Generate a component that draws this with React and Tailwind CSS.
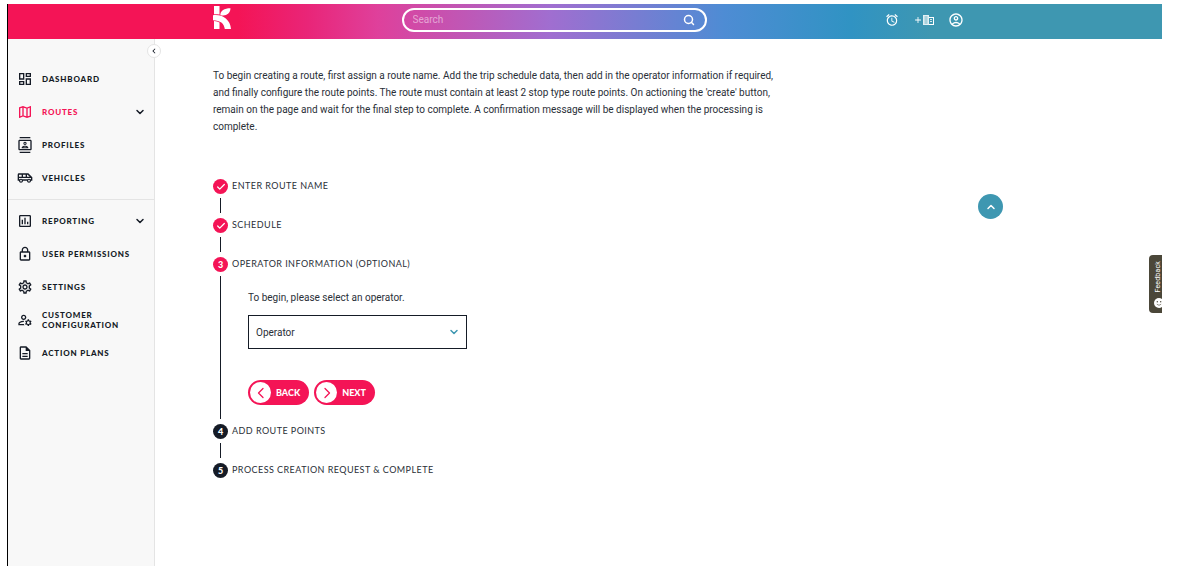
import React, { useState } from "react";
import { Check, ChevronDown, ChevronUp, Search } from "lucide-react";
import {
  MdAlarm,
  MdAdd,
  MdChevronLeft,
  MdOutlineAccountCircle,
  MdOutlineAirportShuttle,
  MdOutlineAssessment,
  MdOutlineContacts,
  MdOutlineDashboard,
  MdOutlineDescription,
  MdOutlineLock,
  MdOutlineManageAccounts,
  MdOutlineMap,
  MdOutlineSettings,
} from "react-icons/md";

const mainLinks = [
  { label: "Dashboard", icon: MdOutlineDashboard },
  { label: "Routes", icon: MdOutlineMap, active: true, expandable: true },
  { label: "Profiles", icon: MdOutlineContacts },
  { label: "Vehicles", icon: MdOutlineAirportShuttle },
];

const adminLinks = [
  { label: "Reporting", icon: MdOutlineAssessment, expandable: true },
  { label: "User permissions", icon: MdOutlineLock },
  { label: "Settings", icon: MdOutlineSettings },
  { label: "Customer configuration", icon: MdOutlineManageAccounts },
  { label: "Action plans", icon: MdOutlineDescription },
];

const Logo = () => (
  <svg viewBox="0 0 18 23" className="h-[23px] w-[18px]" fill="currentColor">
    <path d="M1 0h5.500v8.600C4.800 8.300 3 8.200 1 8.300z" />
    <path d="M7.300 8.800C7.600 4.800 11 2.300 17.500 2.300 17.300 7 13.500 10.200 8.600 9.400z" />
    <path d="M0 9.200c5-.6 9.500.4 12.800 3.300 3.200 2.700 4.700 6 5.200 10.500h-6.200C11 17.500 7.500 14.300 0 14.200z" />
    <path d="M1 15.100c2.200.1 4 .6 5.500 1.500V23H1z" />
  </svg>
);

const CompanyIcon = () => (
  <svg viewBox="0 0 11 10" className="h-2.5 w-[11px]" fill="currentColor">
    <path d="M0 0h6v10H0z" opacity=".85" />
    <path d="M6 2h5v8H6V9h4V3H6z" />
    <path d="M7 4h2v1H7zM7 6h2v1H7z" opacity=".8" />
    <path d="M1 2h4M1 4h4M1 6h4M1 8h4" stroke="#3e97b1" strokeWidth=".4" />
    <path d="M3 1v8" stroke="#3e97b1" strokeWidth=".4" />
  </svg>
);

const Header = () => {
  const [search, setSearch] = useState("");

  return (
    <header className="flex h-[35px] items-center bg-[linear-gradient(90deg,#f41456_0%,#f41456_20%,#e92578_26%,#df409b_32%,#a06ed0_47%,#4e8cd4_62%,#3093c3_73%,#3e97b1_80%)] pr-[198px] pl-[205px] text-white">
      <a href="#home" aria-label="Home" className="mb-2">
        <Logo />
      </a>
      <form
        role="search"
        onSubmit={(e) => e.preventDefault()}
        className="mx-auto mb-1 flex h-6 w-[305px] items-center rounded-full border-2 border-white pr-2.5 pl-[9px]"
      >
        <input
          type="text"
          aria-label="Search"
          placeholder="Search"
          value={search}
          onChange={(e) => setSearch(e.target.value)}
          className="min-w-0 flex-1 bg-transparent text-[10px] outline-none placeholder:text-white/50"
        />
        <button type="submit" aria-label="Submit search">
          <Search className="h-3 w-3" strokeWidth={3} />
        </button>
      </form>
      <div className="mb-1 flex items-center gap-3.5 pl-2">
        <button type="button" aria-label="Alerts">
          <MdAlarm className="h-3.5 w-3.5" />
        </button>
        <button type="button" aria-label="Add company" className="flex items-center">
          <MdAdd className="h-2.5 w-2.5" />
          <CompanyIcon />
        </button>
        <button type="button" aria-label="Account">
          <MdOutlineAccountCircle className="h-4 w-4" />
        </button>
      </div>
    </header>
  );
};

const NavItem = ({ label, icon: Icon, active, expandable }) => (
  <li>
    <a
      href="#nav"
      className={`flex h-[33px] items-center gap-[9px] pr-2 pl-[9px] ${
        active ? "text-[#f41456]" : "text-[#151b26]"
      }`}
    >
      <Icon className="h-4 w-4 shrink-0" />
      <span className="flex-1 font-[Lato,sans-serif] text-[8px] leading-[10px] font-black tracking-widest uppercase">
        {label}
      </span>
      {expandable && (
        <ChevronDown
          className="h-3 w-3 shrink-0 text-[#151b26]"
          strokeWidth={3}
        />
      )}
    </a>
  </li>
);

const Sidebar = () => (
  <aside className="relative w-[147px] shrink-0 border-r border-[#e4e4e4] bg-[#f8f8f8] pt-[23px]">
    <button
      type="button"
      aria-label="Collapse menu"
      className="absolute top-[5px] -right-[7px] flex h-3.5 w-3.5 items-center justify-center rounded-full border border-[#e4e4e4] bg-white"
    >
      <MdChevronLeft className="h-2.5 w-2.5" />
    </button>
    <nav>
      <ul className="border-b border-[#e4e4e4] pb-[5px]">
        {mainLinks.map((link) => (
          <NavItem key={link.label} {...link} />
        ))}
      </ul>
      <ul className="pt-1">
        {adminLinks.map((link) => (
          <NavItem key={link.label} {...link} />
        ))}
      </ul>
    </nav>
  </aside>
);

const Step = ({ number, title, status, last, children }) => (
  <li>
    <div className="flex items-start gap-1">
      <span
        className={`flex h-[15px] w-[15px] items-center justify-center rounded-full font-[Lato,sans-serif] text-[9px] leading-none font-black text-white ${
          status === "todo" ? "bg-[#151b26]" : "bg-[#f41456]"
        }`}
      >
        {status === "done" ? (
          <Check className="h-2.5 w-2.5" strokeWidth={3} />
        ) : (
          number
        )}
      </span>
      <h2 className="font-[Lato,sans-serif] text-[9px] leading-[13px] tracking-wider uppercase">
        {title}
      </h2>
    </div>
    {!last && (
      <div className="mt-1 mb-[5px] ml-[7px] min-h-[15px] border-l border-[#151b26]">
        {children}
      </div>
    )}
  </li>
);

const PillButton = ({ label, direction, onClick }) => (
  <button
    type="button"
    onClick={onClick}
    className="flex h-[25px] items-center gap-[5px] rounded-full bg-[#f41456] pr-[9px] pl-0.5 font-[Lato,sans-serif] text-[9px] font-black text-white uppercase"
  >
    <span className="flex h-[21px] w-[21px] items-center justify-center rounded-full bg-white text-[#f41456]">
      <svg
        viewBox="0 0 12 12"
        className="h-3 w-3"
        fill="none"
        stroke="currentColor"
        strokeWidth="1.3"
        strokeLinecap="round"
        strokeLinejoin="round"
      >
        <path d={direction === "left" ? "M8 1.500L3.500 6 8 10.500" : "M4 1.500L8.500 6 4 10.500"} />
      </svg>
    </span>
    {label}
  </button>
);

const OperatorForm = () => {
  const [operator, setOperator] = useState("");

  return (
    <div className="ml-[27px] pt-[13px] pb-3.5">
      <label htmlFor="operator" className="block text-[10px] leading-[17px]">
        To begin, please select an operator.
      </label>
      <div className="relative mt-[9px] w-[219px]">
        <select
          id="operator"
          value={operator}
          onChange={(e) => setOperator(e.target.value)}
          className="h-[34px] w-full appearance-none border border-[#151b26] bg-white px-[7px] text-[10px]"
        >
          <option value="">Operator</option>
        </select>
        <ChevronDown
          className="pointer-events-none absolute top-[11px] right-[7px] h-3 w-3 text-[#3e97b1]"
          strokeWidth={3}
        />
      </div>
      <div className="mt-[31px] flex gap-[5px]">
        <PillButton label="Back" direction="left" />
        <PillButton label="Next" direction="right" />
      </div>
    </div>
  );
};

const FeedbackTab = () => (
  <button
    type="button"
    className="absolute top-[216px] right-0 flex h-[58px] w-[13px] flex-col items-start justify-between overflow-hidden rounded-l-sm bg-[#4b4739] pt-1.5 pb-[5px] pl-[5px] text-white"
  >
    <span className="rotate-180 text-[7px] leading-[8px] tracking-wide [writing-mode:vertical-rl]">
      Feedback
    </span>
    <svg viewBox="0 0 10 10" className="h-2.5 w-2.5 shrink-0">
      <circle cx="5" cy="5" r="5" fill="currentColor" />
      <circle cx="3.300" cy="3.800" r=".7" fill="#4b4739" />
      <circle cx="6.700" cy="3.800" r=".7" fill="#4b4739" />
      <path d="M2.800 6.200q2.200 2.200 4.400 0" stroke="#4b4739" strokeWidth=".6" fill="none" />
    </svg>
  </button>
);

const App = () => {
  return (
    <div className="flex min-h-screen flex-col bg-white pt-1 pr-8 pb-[18px] pl-[7px] font-[Roboto,sans-serif] text-[#151b26]">
      <div className="flex flex-1 flex-col border-l border-black">
        <Header />
        <div className="relative flex flex-1">
          <Sidebar />
          <main className="flex-1 pt-7 pl-[58px] text-[#2a2f38]">
            <p className="max-w-[570px] text-[10px] leading-[17px]">
              To begin creating a route, first assign a route name. Add the trip
              schedule data, then add in the operator information if required,
              and finally configure the route points. The route must contain at
              least 2 stop type route points. On actioning the 'create' button,
              remain on the page and wait for the final step to complete. A
              confirmation message will be displayed when the processing is
              complete.
            </p>
            <ol className="mt-11">
              <Step number={1} title="Enter route name" status="done" />
              <Step number={2} title="Schedule" status="done" />
              <Step
                number={3}
                title="Operator information (optional)"
                status="current"
              >
                <OperatorForm />
              </Step>
              <Step number={4} title="Add route points" status="todo" />
              <Step
                number={5}
                title="Process creation request & complete"
                status="todo"
                last
              />
            </ol>
          </main>
          <button
            type="button"
            aria-label="Back to top"
            className="absolute top-[155px] right-[159px] flex h-[25px] w-[25px] items-center justify-center rounded-full bg-[#3e97b1] text-white"
          >
            <ChevronUp className="h-3 w-3" strokeWidth={3} />
          </button>
          <FeedbackTab />
        </div>
      </div>
    </div>
  );
};

export default App;
